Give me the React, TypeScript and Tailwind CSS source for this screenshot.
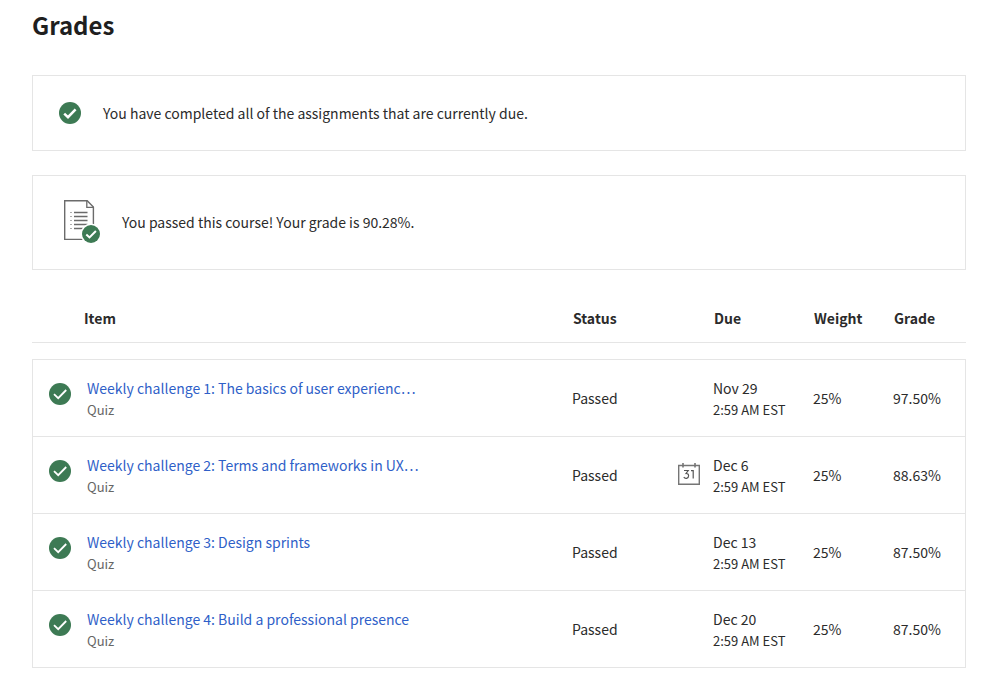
import React from 'react';

interface GradeItem {
  id: number;
  title: string;
  type: string;
  status: string;
  date: string;
  time: string;
  weight: string;
  grade: string;
  showCalendar?: boolean;
}

const items: GradeItem[] = [
  {
    id: 1,
    title: 'Weekly challenge 1: The basics of user experienc…',
    type: 'Quiz',
    status: 'Passed',
    date: 'Nov 29',
    time: '2:59 AM EST',
    weight: '25%',
    grade: '97.50%',
  },
  {
    id: 2,
    title: 'Weekly challenge 2: Terms and frameworks in UX…',
    type: 'Quiz',
    status: 'Passed',
    date: 'Dec 6',
    time: '2:59 AM EST',
    weight: '25%',
    grade: '88.63%',
    showCalendar: true,
  },
  {
    id: 3,
    title: 'Weekly challenge 3: Design sprints',
    type: 'Quiz',
    status: 'Passed',
    date: 'Dec 13',
    time: '2:59 AM EST',
    weight: '25%',
    grade: '87.50%',
  },
  {
    id: 4,
    title: 'Weekly challenge 4: Build a professional presence',
    type: 'Quiz',
    status: 'Passed',
    date: 'Dec 20',
    time: '2:59 AM EST',
    weight: '25%',
    grade: '87.50%',
  },
];

const CheckCircle: React.FC<{ bold?: boolean }> = ({ bold }) => (
  <svg className="block h-[22px] w-[22px] flex-shrink-0" viewBox="0 0 22 22" fill="none" aria-hidden="true">
    <circle cx="11" cy="11" r="11" fill="#3d7a54" />
    {bold ? (
      <path d="M5.2 11.6 9 15.2 16.6 7.4" stroke="#fff" strokeWidth="2.5" />
    ) : (
      <path d="M5 11.2 9.2 15.2 17.2 7" stroke="#fff" strokeWidth="1.8" />
    )}
  </svg>
);

const CourseReport: React.FC = () => (
  <svg className="block h-[44px] w-[37px] flex-shrink-0" viewBox="0 0 37 44" fill="none" aria-hidden="true">
    <path d="M.7.7H23.2L29.4 7V39.4H.7Z" fill="#fff" stroke="#6b6b6b" strokeWidth="1.4" />
    <path d="M22.8 .7V7.3H29.4" stroke="#6b6b6b" strokeWidth="1.3" />
    <path
      d="M10 12.5H23.5M10 16.5H23.5M10 20.5H23.5M10 24.5H23.5M10 28.5H19"
      stroke="#6b6b6b"
      strokeWidth="1.3"
    />
    <path
      d="M6.3 12.5H7.7M6.3 16.5H7.7M6.3 20.5H7.7M6.3 24.5H7.7M6.3 28.5H7.7"
      stroke="#8a8a8a"
      strokeWidth="1.2"
    />
    <circle cx="27" cy="34" r="10.5" fill="#fff" />
    <circle cx="27" cy="34" r="9" fill="#3d7a54" />
    <path d="M22.3 34.4 25.5 37.4 31.9 31" stroke="#fff" strokeWidth="2" />
  </svg>
);

const CalendarIcon: React.FC = () => (
  <svg className="block h-[22px] w-[22px]" viewBox="0 0 22 22" fill="none" aria-hidden="true">
    <path d="M.7 2.5H21.3V21.3H.7Z" stroke="#757575" strokeWidth="1.4" />
    <path d="M5 0V4.4M17 0V4.4" stroke="#757575" strokeWidth="1.6" />
    <path
      d="M6 7.5H10.2L8 10.5C9.6 10.4 10.6 11.3 10.6 12.8C10.6 15.8 7 16 5.8 14.2M13 7.6H15.2M15.2 7V15.6"
      stroke="#555"
      strokeWidth="1.2"
    />
  </svg>
);

const App: React.FC = () => {
  const cell = 'border-b border-[#e5e5e5] p-0 align-middle';
  const head = 'border-b border-[#e5e5e5] py-3 pl-px font-bold';

  return (
    <main
      lang="en"
      className="bg-white pt-[7px] pr-[35px] pb-8 pl-8 font-['Noto_Sans_CJK_KR','Noto_Sans_CJK_SC',sans-serif] text-[14px] leading-6 text-[#2b2b2b]"
    >
      <h1 className="text-[24px] leading-9 font-bold text-[#1f1f1f]">Grades</h1>

      <section className="mt-8 flex items-center gap-[22px] border border-[#e5e5e5] px-[26px] py-[25px]">
        <CheckCircle bold />
        <p>You have completed all of the assignments that are currently due.</p>
      </section>

      <section className="mt-6 flex items-center gap-[21px] border border-[#e5e5e5] px-[31px] pt-6 pb-[25px]">
        <CourseReport />
        <p>You passed this course! Your grade is 90.28%.</p>
      </section>

      <table className="mt-6 w-full table-fixed border-separate border-spacing-0 text-left">
        <colgroup>
          <col className="w-[55px]" />
          <col />
          <col className="w-[106px]" />
          <col className="w-[35px]" />
          <col className="w-[100px]" />
          <col className="w-[80px]" />
          <col className="w-[73px]" />
        </colgroup>
        <thead className="after:block after:h-4 after:content-['']">
          <tr>
            <th scope="col" colSpan={2} className="border-b border-[#e5e5e5] py-3 pl-[52px] font-bold">
              Item
            </th>
            <th scope="col" colSpan={2} className={head}>Status</th>
            <th scope="col" className={head}>Due</th>
            <th scope="col" className={head}>Weight</th>
            <th scope="col" className={head}>Grade</th>
          </tr>
        </thead>
        <tbody className="[&>tr:first-child>td]:border-t">
          {items.map((item) => (
            <tr key={item.id}>
              <td className="border-b border-l border-[#e5e5e5] pt-[23px] pl-4 align-top">
                <CheckCircle />
              </td>
              <td className="border-b border-[#e5e5e5] px-0 py-4">
                <a href="#" className="block leading-6 text-[#2f5fc8]">{item.title}</a>
                <p className="text-[13px] leading-5 text-[#666]">{item.type}</p>
              </td>
              <td className={cell}>{item.status}</td>
              <td className="border-b border-[#e5e5e5] pb-0.5 align-middle">
                {item.showCalendar && <CalendarIcon />}
              </td>
              <td className={cell}>
                <p className="leading-6">{item.date}</p>
                <p className="text-[13px] leading-5">{item.time}</p>
              </td>
              <td className={cell}>{item.weight}</td>
              <td className="border-r border-b border-[#e5e5e5] p-0 align-middle">{item.grade}</td>
            </tr>
          ))}
        </tbody>
      </table>
    </main>
  );
};

export default App;
